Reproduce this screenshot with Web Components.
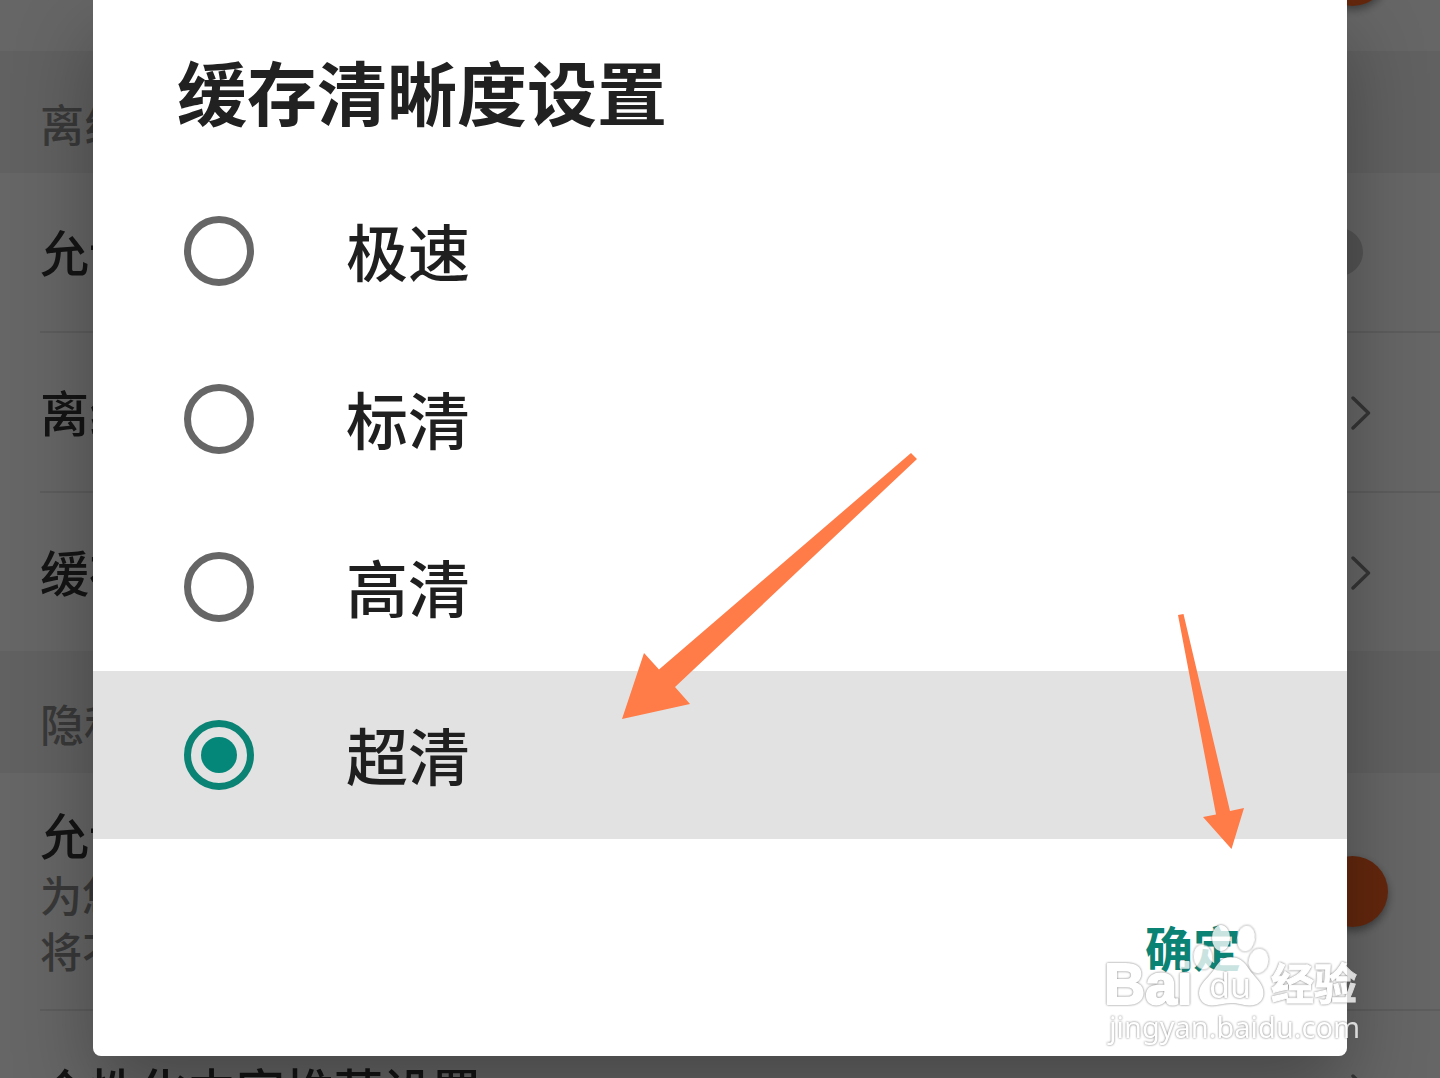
<!DOCTYPE html>
<html lang="zh-CN">
<head>
<meta charset="utf-8">
<meta name="viewport" content="width=device-width, initial-scale=1">
<title>缓存清晰度设置</title>
<style>
  html, body { margin: 0; height: 100%; }
  body {
    overflow: hidden;
    position: relative;
    background: #fff;
    color: #333;
    font-family: "Noto Sans CJK SC", "Noto Sans", sans-serif;
  }
</style>
</head>
<body>
<settings-page>
  <settings-row class="lead" kind="switch" checked></settings-row>
  <settings-section>离线</settings-section>
  <settings-row kind="switch">允许</settings-row>
  <settings-row kind="link">离线</settings-row>
  <settings-row kind="link" last>缓存</settings-row>
  <settings-section>隐私</settings-section>
  <settings-row kind="switch" checked>允许<span slot="note">为您<br>将不</span></settings-row>
  <settings-row kind="link">个性化内容推荐设置</settings-row>
</settings-page>

<choice-dialog>
  <span slot="title">缓存清晰度设置</span>
  <choice-option>极速</choice-option>
  <choice-option>标清</choice-option>
  <choice-option>高清</choice-option>
  <choice-option checked>超清</choice-option>
  <span slot="confirm">确定</span>
</choice-dialog>

<pointer-arrows></pointer-arrows>
<site-watermark></site-watermark>

<script>
class BaseElement extends HTMLElement {
  render(html) {
    if (!this.shadowRoot) this.attachShadow({ mode: "open" });
    this.shadowRoot.innerHTML = html;
  }
}

customElements.define("settings-page", class extends BaseElement {
  connectedCallback() {
    this.render(`
      <style>
        :host { display: block; height: 100%; overflow: hidden; }
        main { display: flex; flex-direction: column; }
        ::slotted(*) { flex: none; }
        ::slotted(.lead) { margin-top: -109px; --line: transparent; }
      </style>
      <main><slot></slot></main>`);
  }
});

customElements.define("settings-section", class extends BaseElement {
  connectedCallback() {
    this.render(`
      <style>
        :host { display: block; background: #f3f3f3; }
        h2 {
          margin: 0; padding: 40px 40px 18px;
          font-size: 44px; line-height: 64px; font-weight: 500; color: #8f8f8f;
        }
      </style>
      <h2><slot></slot></h2>`);
  }
});

customElements.define("settings-row", class extends BaseElement {
  connectedCallback() {
    const isLink = this.getAttribute("kind") === "link";
    const text = `<span class="text"><span class="name"><slot></slot></span><span class="note"><slot name="note"></slot></span></span>`;
    const body = isLink
      ? `<a class="row" href="#">${text}
           <svg width="22" height="36" viewBox="0 0 22 36" fill="none" stroke="#858585" stroke-width="3.4" stroke-linecap="round" stroke-linejoin="round" aria-hidden="true"><path d="M4 4L19.500 19L4 34"/></svg></a>`
      : `<label class="row">${text}<input type="checkbox" ${this.hasAttribute("checked") ? "checked" : ""}></label>`;
    this.render(`
      <style>
        :host { display: block; padding-left: 40px; background: #fff; }
        .row {
          display: flex; align-items: center; justify-content: space-between;
          box-sizing: border-box; min-height: 160px;
          padding: 29px 52px 29px 0; border-bottom: 2px solid var(--line, #e8e8e8);
          color: inherit; text-decoration: none;
        }
        a.row { padding-right: 69px; }
        :host([last]) .row { border-bottom: 0; min-height: 158px; }
        .text { display: flex; flex-direction: column; padding-bottom: 2px; }
        .name { font-size: 49px; line-height: 64px; font-weight: 500; }
        .note { font-size: 42px; line-height: 56px; font-weight: 500; color: #8f8f8f; }
        input {
          appearance: none; margin: 0; width: 130px; height: 71px;
          display: flex; align-items: center; position: relative;
        }
        input::before {
          content: ""; flex: 1; height: 48px; margin: 0 25px;
          border-radius: 24px; background: #d2d2d2;
        }
        input::after {
          content: ""; position: absolute; left: 0; top: 0;
          width: 71px; height: 71px; border-radius: 50%;
          background: #fff; box-shadow: 0 4px 8px rgba(0,0,0,.4);
        }
        input:checked::before { background: #f9b79c; }
        input:checked::after { left: auto; right: 0; background: #fa6322; }
      </style>
      ${body}`);
  }
});

customElements.define("choice-option", class extends BaseElement {
  connectedCallback() {
    this.render(`
      <style>
        :host { display: block; }
        label {
          display: flex; align-items: center; gap: 92px;
          height: 168px; padding: 0 91px; box-sizing: border-box;
          font-size: 62px; line-height: 96px; font-weight: 500; color: #1f1f1f;
        }
        label:has(input:checked) { background: #e2e2e2; }
        span { padding-bottom: 2px; }
        input {
          appearance: none; margin: 0; flex: none; box-sizing: border-box;
          width: 70px; height: 70px; border: 7px solid #666; border-radius: 50%;
          display: grid; place-items: center;
        }
        input:checked { border-color: #0a8375; }
        input:checked::before {
          content: ""; width: 36px; height: 36px; border-radius: 50%; background: #048778;
        }
      </style>
      <label><input type="radio"><span><slot></slot></span></label>`);
    this.input = this.shadowRoot.querySelector("input");
    this.input.checked = this.hasAttribute("checked");
    this.input.addEventListener("change", () =>
      this.dispatchEvent(new CustomEvent("choose", { bubbles: true })));
  }
});

customElements.define("choice-dialog", class extends BaseElement {
  connectedCallback() {
    this.render(`
      <style>
        :host {
          display: block; position: absolute; inset: 0;
          padding: 0 93px; background: rgba(0,0,0,.6); overflow: hidden;
        }
        section {
          background: #fff; border-radius: 0 0 8px 8px; overflow: hidden;
        }
        .shadow { border-radius: 0 0 8px 8px; box-shadow: 0 36px 80px rgba(0,0,0,.3); }
        h1 {
          margin: 0; padding: 39px 84px 24px;
          font-size: 70px; line-height: 104px; font-weight: 700; color: #212121;
        }
        footer { display: flex; justify-content: flex-end; padding: 67px 82px 70px; }
        button {
          border: 0; background: none; margin: 0; padding: 4px 24px;
          font: 700 48px/72px "Noto Sans CJK SC", sans-serif; color: #0a8375;
        }
      </style>
      <div class="shadow">
        <section role="dialog" aria-labelledby="t">
          <h1 id="t"><slot name="title"></slot></h1>
          <div role="radiogroup" aria-labelledby="t"><slot></slot></div>
          <footer><button type="button"><slot name="confirm"></slot></button></footer>
        </section>
      </div>`);
    this.addEventListener("choose", (e) => {
      this.querySelectorAll("choice-option").forEach((o) => {
        if (o !== e.target) o.input.checked = false;
      });
    });
  }
});

customElements.define("pointer-arrows", class extends BaseElement {
  connectedCallback() {
    this.render(`
      <style>
        :host { display: block; position: absolute; left: 0; top: 0; pointer-events: none; }
        svg { display: block; }
      </style>
      <svg width="1440" height="1078" viewBox="0 0 1440 1078" fill="#ff7b47" aria-hidden="true">
        <polygon points="911,453 917,459 675,687 690,704 622,719 644,653 659,669.500"/>
        <polygon points="1178,615 1183.500,614 1230,811 1244,808 1231.500,849 1203,817 1216,814.500"/>
      </svg>`);
  }
});

customElements.define("site-watermark", class extends BaseElement {
  connectedCallback() {
    this.render(`
      <style>
        :host { display: block; position: absolute; right: 70px; bottom: 28px; pointer-events: none; }
        svg { display: block; overflow: visible; }
        .mark { opacity: .78; }
        .mark > * { fill: #fff; filter: drop-shadow(0 0 1px #555); }
        .latin { font-family: "Liberation Sans", sans-serif; font-weight: 700; stroke: #fff; stroke-width: 2; stroke-linejoin: round; }
        .du { font-family: "Noto Sans", sans-serif; }
        .han { font-family: "Noto Sans CJK SC", sans-serif; font-weight: 700; stroke: #fff; stroke-width: 1; }
        .url { font-family: "Noto Sans", sans-serif; }
      </style>
      <svg width="270" height="130" viewBox="0 0 270 130">
        <g class="mark">
          <text class="latin" x="4" y="84" font-size="57">Bai</text>
          <ellipse cx="121" cy="18" rx="9" ry="13"/>
          <ellipse cx="146" cy="18.500" rx="9" ry="13" transform="rotate(8 146 18.500)"/>
          <ellipse cx="103" cy="37" rx="9.500" ry="12.500" transform="rotate(-8 103 37)"/>
          <ellipse cx="158.500" cy="41" rx="10" ry="12.500" transform="rotate(12 158.500 41)"/>
          <path d="M131 37C142 37 147 46 151 52C157 59 164 65 163.500 74C163 82 156 86 149 85.500C142 85 138 83 131 83C124 83 119 85.500 112 85.500C104 85.500 99 80 99 73C99 64 108 58 113 51C117 45 121 37 131 37Z"/>
          <text class="du" x="109" y="78" font-size="34">du</text>
          <text class="han" x="171" y="80" font-size="43">经验</text>
          <text class="url" x="9" y="118" font-size="29">jingyan.baidu.com</text>
        </g>
      </svg>`);
  }
});
</script>
</body>
</html>
